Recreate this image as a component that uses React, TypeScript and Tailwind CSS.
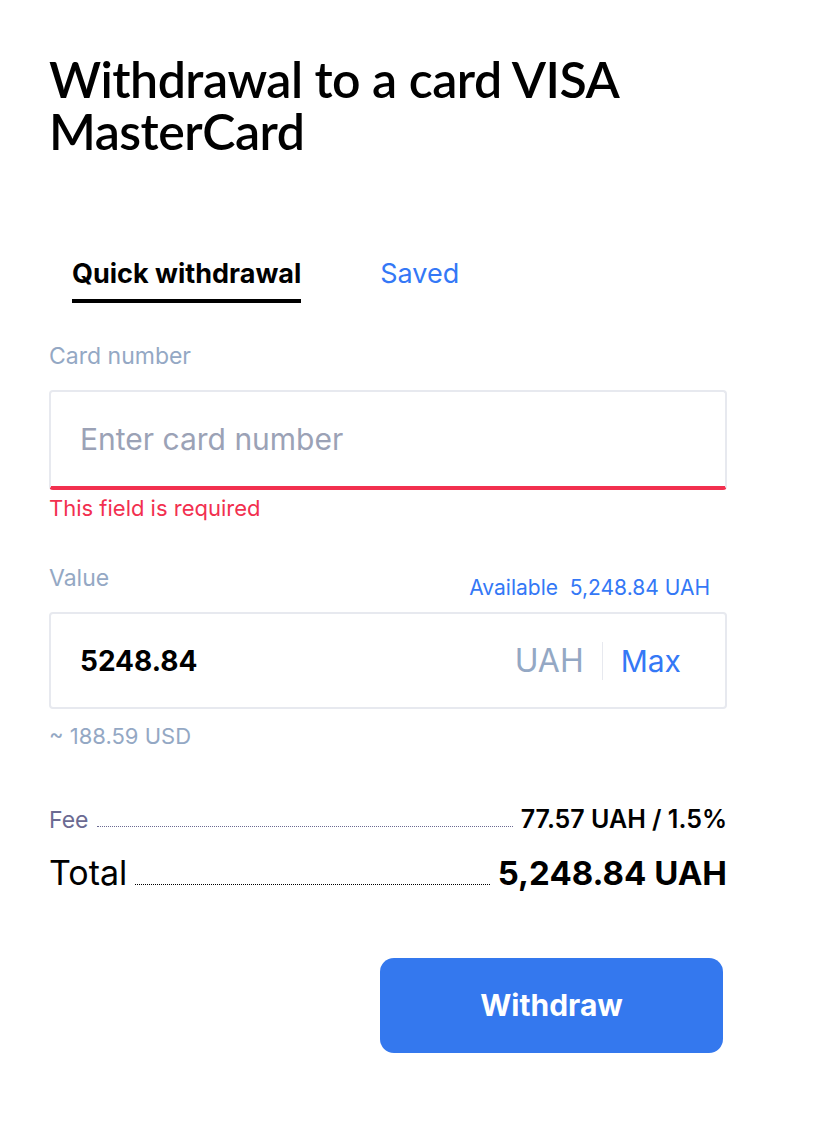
import { useState } from 'react';

const font = { fontFamily: '"Inter", "Noto Sans", sans-serif' };

const DotRow = ({ label, value, big }: { label: string; value: string; big?: boolean }) => (
  <div className="flex items-end">
    <span
      className={
        big ? 'text-[34px] leading-none text-black' : 'text-[23px] leading-none text-[#6b6a92]'
      }
    >
      {label}
    </span>
    <span
      className={`flex-1 mx-[8px] mb-[5px] border-b border-dotted ${
        big ? 'border-black' : 'border-[#6b6a92]'
      }`}
    />
    <span
      className={
        big
          ? 'text-[33px] leading-none font-bold text-black'
          : 'text-[25px] leading-none font-semibold text-black'
      }
    >
      {value}
    </span>
  </div>
);

export default function App() {
  const [tab, setTab] = useState<'quick' | 'saved'>('quick');
  const [card, setCard] = useState('');
  const [value, setValue] = useState('5248.84');

  return (
    <div className="min-h-[1126px] bg-white px-[49px] pt-[53px]" style={font}>
      <h1
        className="text-[50px] leading-[52px] font-semibold text-black w-[620px] tracking-[-0.5px]"
        style={{ fontFamily: '"Lato", sans-serif' }}
      >
        Withdrawal to a card VISA MasterCard
      </h1>

      {/* Tabs */}
      <div className="flex gap-[79px] mt-[103px] pl-[23px]">
        <button
          onClick={() => setTab('quick')}
          className={`text-[27px] leading-none pb-[12px] border-b-4 ${
            tab === 'quick' ? 'font-bold text-black border-black' : 'text-[#3478f6] border-transparent'
          }`}
        >
          Quick withdrawal
        </button>
        <button
          onClick={() => setTab('saved')}
          className={`text-[27px] leading-none pb-[12px] border-b-4 ${
            tab === 'saved' ? 'font-bold text-black border-black' : 'text-[#3478f6] border-transparent'
          }`}
        >
          Saved
        </button>
      </div>

      {/* Card number */}
      <div className="mt-[42px] w-[678px]">
        <div className="text-[23px] leading-none text-[#94a8c4]">Card number</div>
        <div className="mt-[22px] h-[100px] rounded-[4px] border-2 border-[#e7e9ef] border-b-[4px] border-b-[#f2304f] flex items-center px-[29px]">
          <input
            value={card}
            onChange={(e) => setCard(e.target.value)}
            placeholder="Enter card number"
            className="w-full outline-none text-[30px] text-black placeholder:text-[#9ba2b6] bg-transparent"
          />
        </div>
        <div className="mt-[7px] text-[22px] leading-none text-[#f2304f]">This field is required</div>
      </div>

      {/* Value */}
      <div className="mt-[48px] w-[678px]">
        <div className="flex justify-between">
          <span className="text-[23px] leading-none text-[#94a8c4]">Value</span>
          <span className="mt-[10px] mr-[17px] text-[21px] leading-none text-[#3478f6]">
            Available&nbsp; 5,248.84 UAH
          </span>
        </div>
        <div className="mt-[14px] h-[97px] rounded-[4px] border-2 border-[#e7e9ef] flex items-center pl-[29px] pr-[44px]">
          <input
            value={value}
            onChange={(e) => setValue(e.target.value)}
            className="flex-1 min-w-0 outline-none text-[28px] font-bold text-black bg-transparent"
          />
          <span className="text-[32px] leading-none text-[#94a8c4]">UAH</span>
          <span className="mx-[18px] w-px h-[38px] bg-[#e7e9ef]" />
          <button className="text-[30px] leading-none text-[#3478f6]">Max</button>
        </div>
        <div className="mt-[16px] text-[22px] leading-none text-[#94a8c4]">~ 188.59 USD</div>
      </div>

      {/* Summary */}
      <div className="mt-[60px] w-[678px] flex flex-col gap-[24px]">
        <DotRow label="Fee" value="77.57 UAH / 1.5%" />
        <DotRow label="Total" value="5,248.84 UAH" big />
      </div>

      <div className="mt-[68px] w-[674px] flex justify-end">
        <button className="w-[343px] h-[95px] rounded-[14px] bg-[#3478ee] text-white text-[30px] font-bold">
          Withdraw
        </button>
      </div>
    </div>
  );
}
